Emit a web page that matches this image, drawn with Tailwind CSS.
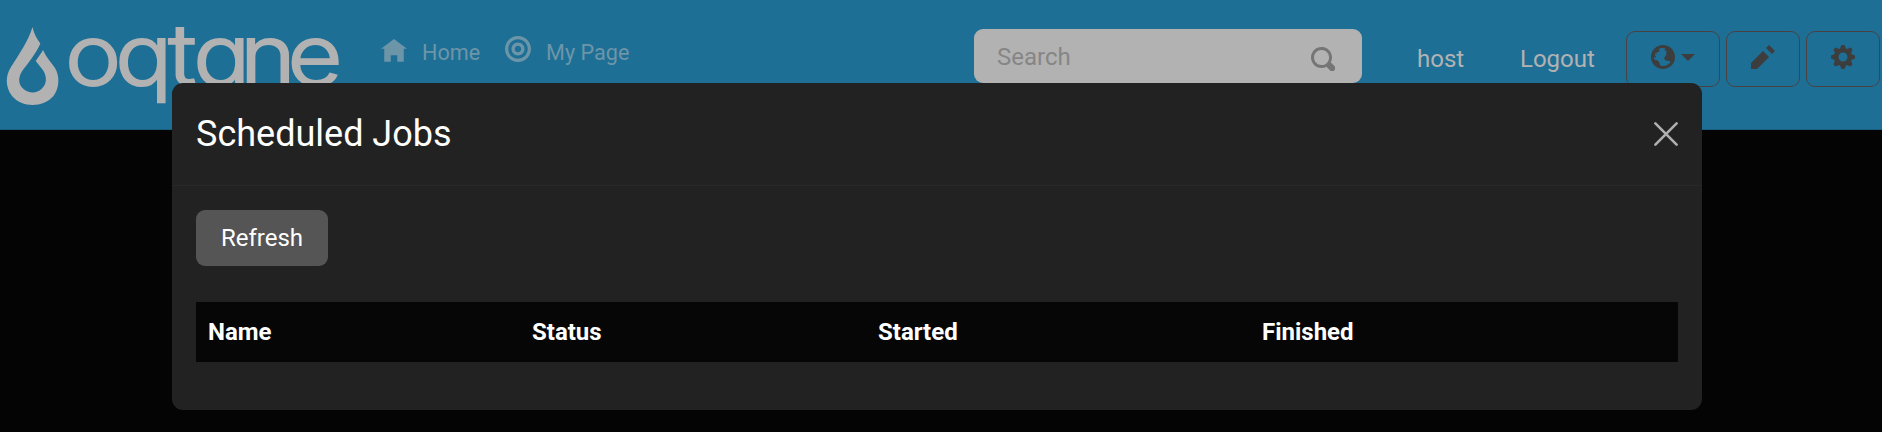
<!DOCTYPE html>
<html lang="en">
<head>
<meta charset="utf-8">
<title>Scheduled Jobs</title>
<script src="https://cdn.jsdelivr.net/npm/@tailwindcss/browser@4"></script>
</head>
<body class="relative h-[432px] overflow-hidden bg-[#040404] font-[Roboto,sans-serif] text-2xl leading-9 text-white">
<header class="flex h-[130px] items-start border-b border-[#1a5f80] bg-[#1e6f96]">
  <svg class="h-[120px] w-[360px] shrink-0" viewBox="0 0 360 120" fill="#b2b2b2" aria-label="oqtane">
    <path d="M32.5 27C34 34 37 39 40.300 43.500C37 52 29 62 22.500 70.500C17.500 78 18.500 85 23.500 89C28.500 93.500 37 93.500 41.500 89C47 84 47 77 43.500 71C41 67 38 64 35.700 61C38.500 57 41 53.500 43 50C46 57 51 62 55 68C60 76 59.500 88 53.500 96C43 108 22 108 12 96C5 87 5.500 75 11 67C19 54 28 42 32.500 27Z"/>
    <text transform="scale(1.13 1)" y="85.500" x="57.500 102 149 171 212.500 254.500" font-family="Inter, sans-serif" font-size="84" font-weight="300" stroke="#b2b2b2" stroke-width="2" style="font-feature-settings:'cv11'">oqtane</text>
  </svg>
  <nav class="flex w-[614px] items-start pl-[21px] pt-[35px] text-[21.6px] text-[#6d95a8]">
    <a class="flex"><svg class="mt-[4px] h-[26px] w-[26px]" viewBox="0 0 8 8" fill="currentColor"><path d="M4 0l-4 3h1v4h2v-2h2v2h2v-4.030l1 .03-4-3z"/></svg><span class="ml-[15px]">Home</span></a>
    <a class="ml-[25px] flex"><svg class="mt-[1px] h-[26px] w-[26px]" viewBox="0 0 8 8" fill="currentColor"><path d="M4 0c-2.200 0-4 1.800-4 4s1.800 4 4 4 4-1.800 4-4-1.800-4-4-4zm0 1c1.660 0 3 1.340 3 3s-1.340 3-3 3-3-1.340-3-3 1.340-3 3-3zm0 1c-1.110 0-2 .9-2 2s.89 2 2 2 2-.9 2-2-.89-2-2-2zm0 1c.56 0 1 .44 1 1s-.44 1-1 1-1-.44-1-1 .44-1 1-1z"/></svg><span class="ml-[15px]">My Page</span></a>
  </nav>
  <div class="mt-[29px] flex h-[54px] w-[388px] shrink-0 items-center justify-between rounded-[9px] bg-[#b2b2b2] pl-[23px] pr-[27px] text-[#868686]">
    <span class="pt-0.5">Search</span>
    <svg class="mt-[6px] h-6 w-6" viewBox="0 0 8 8" fill="#757575"><path d="M3.500 0c-1.930 0-3.500 1.570-3.500 3.500s1.570 3.500 3.500 3.500c.59 0 1.170-.14 1.660-.41a1 1 0 0 0 .13.13l1 1a1.020 1.020 0 1 0 1.440-1.440l-1-1a1 1 0 0 0-.16-.13c.27-.49.44-1.060.44-1.660 0-1.930-1.550-3.500-3.500-3.500zm.02 1c1.390 0 2.500 1.110 2.500 2.500 0 .66-.24 1.270-.66 1.720-.01.01-.02.02-.03.03a1 1 0 0 0-.13.13c-.44.4-1.040.63-1.690.63-1.390 0-2.500-1.110-2.500-2.500s1.110-2.500 2.500-2.500z"/></svg>
  </div>
  <a class="ml-[55px] mt-[41px] w-[103px] text-[#b2b2b2]">host</a>
  <a class="mt-[41px] w-[106px] text-[#b2b2b2]">Logout</a>
  <div class="mt-[31px] flex shrink-0 gap-1.5 text-[#3d3d3d]">
    <button class="flex h-14 w-[94px] items-start rounded-[9px] border border-[#484343] pl-6 pt-[13px]">
      <svg class="h-6 w-6" viewBox="0 0 8 8" fill="currentColor"><path d="M4 0c-2.200 0-4 1.800-4 4s1.800 4 4 4 4-1.800 4-4-1.800-4-4-4zm0 1c.33 0 .64.09.94.19-.21.2-.45.38-.41.56.04.18.69.13.69.5 0 .27-.42.35-.13.66.35.35-.64.98-.66 1.440-.03.83.84.97 1.530.97.42 0 .53.2.5.44-.54.77-1.460 1.250-2.470 1.250-.38 0-.73-.09-1.060-.22.22-.44-.28-1.310-.75-1.590-.23-.23-.72-.14-1-.25-.09-.27-.18-.54-.19-.84.03-.05.08-.09.16-.09.19 0 .45.38.59.34.18-.04-.74-1.310-.31-1.560.2-.12.6.39.47-.16-.12-.51.36-.28.66-.41.26-.11.45-.41.13-.59-.06-.03-.13-.1-.22-.19.45-.27.97-.44 1.530-.44z"/></svg>
      <svg class="ml-1.5 mt-[9px] h-[7px] w-[14px]" viewBox="0 0 14 7" fill="currentColor"><path d="M0 0h14L7 7z"/></svg>
    </button>
    <button class="flex h-14 w-[74px] items-start rounded-[9px] border border-[#484343] pl-6 pt-[13px]"><svg class="h-6 w-6" viewBox="0 0 8 8" fill="currentColor"><path d="M6 0l-1 1 2 2 1-1-2-2zm-2 2l-4 4v2h2l4-4-2-2z"/></svg></button>
    <button class="flex h-14 w-[74px] items-start rounded-[9px] border border-[#484343] pl-6 pt-[13px]"><svg class="h-6 w-6" viewBox="0 0 8 8" fill="currentColor"><path d="M3.500 0l-.5 1.190c-.1.03-.19.08-.28.13l-1.190-.5-.72.72.5 1.190c-.05.1-.09.18-.13.28l-1.190.5v1l1.190.5c.04.1.08.18.13.28l-.5 1.190.72.72 1.190-.5c.09.04.18.09.28.13l.5 1.190h1l.5-1.190c.09-.04.19-.08.28-.13l1.190.5.72-.72-.5-1.190c.04-.09.09-.19.13-.28l1.190-.5v-1l-1.190-.5c-.03-.09-.08-.19-.13-.28l.5-1.190-.72-.72-1.190.5c-.09-.04-.19-.09-.28-.13l-.5-1.190h-1zm.5 2.500c.83 0 1.500.67 1.500 1.500s-.67 1.500-1.500 1.500-1.500-.67-1.500-1.500.67-1.500 1.500-1.500z"/></svg></button>
  </div>
</header>
<section role="dialog" class="absolute left-[172px] top-[83px] h-[327px] w-[1530px] rounded-[11px] bg-[#222]">
  <div class="flex h-[103px] items-center justify-between border-b border-[#282828] px-6">
    <h1 class="text-4xl leading-[43px]">Scheduled Jobs</h1>
    <svg class="h-6 w-6" viewBox="0 0 24 24" fill="none" stroke="#b0b0b0" stroke-width="2.600" stroke-linecap="round"><path d="M1.400 1.400l21.200 21.200M22.600 1.400L1.400 22.600"/></svg>
  </div>
  <div class="px-6 pt-6">
    <button class="flex h-14 w-[132px] items-center justify-center rounded-[9px] bg-[#555]">Refresh</button>
    <table class="mt-9 h-[60px] w-full table-fixed border-collapse bg-[#060606] text-left">
      <thead><tr>
        <th class="w-[324px] p-0 pl-3 font-bold">Name</th>
        <th class="w-[346px] p-0 pl-3 font-bold">Status</th>
        <th class="w-[384px] p-0 pl-3 font-bold">Started</th>
        <th class="p-0 pl-3 font-bold">Finished</th>
      </tr></thead>
    </table>
  </div>
</section>
</body>
</html>
